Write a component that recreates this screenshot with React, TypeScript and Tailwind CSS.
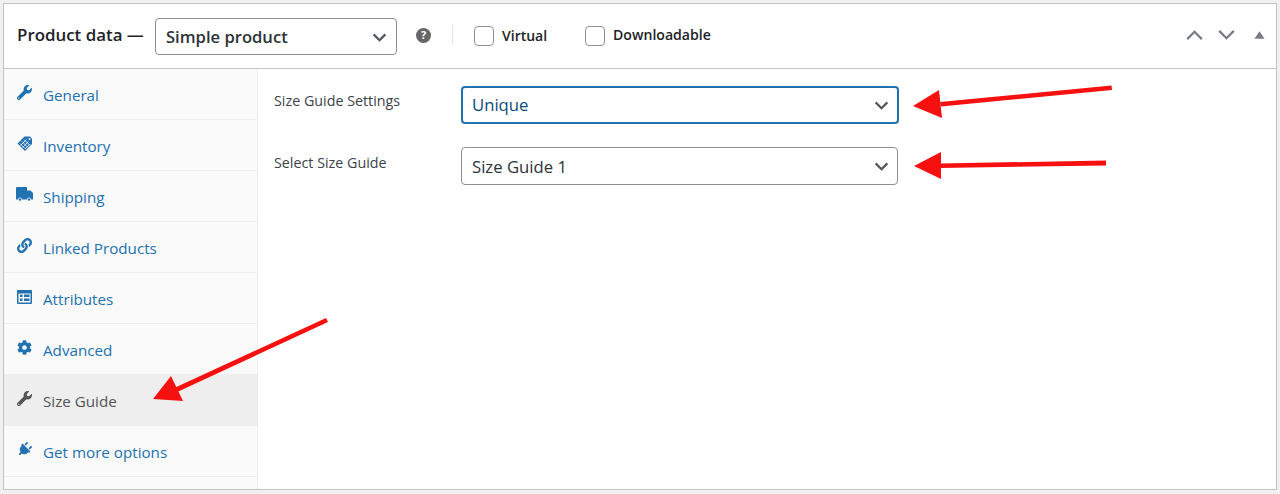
import React from "react";
import { FaWrench, FaLink, FaCog, FaPlug } from "react-icons/fa";

function Icon({ n }: { n: string }) {
  const c = "w-[16px] h-[16px] shrink-0";
  if (n === "wrench") return <FaWrench className="w-[15px] h-[15px] shrink-0" />;
  if (n === "tag") return (
    <svg viewBox="0 0 16 16" className={c}>
      <path className="fill-current" d="M7.500 0.500 0.500 7.500 8 15l7-7V2.500L13 0.500z" />
      <path d="M5 5.500l6 6M7 3.500l6 6M3 7.500l5 5M5.500 11.500l6-6M3.500 9.500l6-6M8 13l5-5" stroke="#fafafa" strokeWidth="0.8" fill="none" />
      <circle cx="12.500" cy="3" r="1" fill="#fafafa" />
    </svg>
  );
  if (n === "truck") return (
    <svg viewBox="0 0 17 15" className="w-[17px] h-[15px] shrink-0 -ml-[1px]">
      <path className="fill-current" d="M0 1a1 1 0 0 1 1-1h10v3.500h3.500L17 6v6.500H0z" />
      <circle cx="4" cy="12.500" r="2" fill="#fafafa" />
      <circle cx="13" cy="12.500" r="2" fill="#fafafa" />
      <circle className="fill-current" cx="4" cy="12.500" r="1.200" />
      <circle className="fill-current" cx="13" cy="12.500" r="1.200" />
    </svg>
  );
  if (n === "link") return <FaLink className="w-[15px] h-[15px] shrink-0" />;
  if (n === "card") return (
    <svg viewBox="0 0 15 14" className="w-[15px] h-[14px] shrink-0">
      <path className="fill-current" fillRule="evenodd" d="M0 1a1 1 0 0 1 1-1h13a1 1 0 0 1 1 1v12a1 1 0 0 1-1 1H1a1 1 0 0 1-1-1zM1.500 3.500v9h12v-9z" />
      <path className="fill-current" d="M3 4.500h2.500V7H3zM3 8.500h2.500V11H3zM7 4.500h5.500V7H7zM7 8.500h5.500V11H7z" />
    </svg>
  );
  if (n === "gear") return <FaCog className="w-[15px] h-[15px] shrink-0" />;
  return <FaPlug className="w-[15px] h-[15px] shrink-0 rotate-45" />;
}

function Chevron() {
  return (
    <svg viewBox="0 0 16 10" className="w-[15px] h-[9px] fill-none stroke-[#50575e] stroke-[2.500]">
      <path d="M1.500 1.500 8 8l6.500-6.500" />
    </svg>
  );
}

const tabs = [
  ["General", "wrench"],
  ["Inventory", "tag"],
  ["Shipping", "truck"],
  ["Linked Products", "link"],
  ["Attributes", "card"],
  ["Advanced", "gear"],
  ["Size Guide", "wrench"],
  ["Get more options", "plug"],
];

function Field({ label, value, focus, lift }: { label: string; value: string; focus?: boolean; lift: string }) {
  return (
    <div className="flex items-start">
      <div className={"w-[188px] pl-[1px] text-[14.300px] leading-[20px] text-[#3c434a] " + lift}>{label}</div>
      <div className={"h-[38px] rounded-[4px] flex items-center justify-between pr-[8px] text-[16.700px] " + (focus ? "w-[438px] pl-[9px] border-2 border-[#2271b1] text-[#0a4b78]" : "w-[437px] pl-[10px] border border-[#8c8f94] text-[#2c3338] pt-[1px]")}>
        <span>{value}</span>
        <Chevron />
      </div>
    </div>
  );
}

export default function App() {
  return (
    <div className="w-[1280px] h-[494px] bg-[#f0f0f1] pt-[3px] pl-[3px] relative overflow-hidden" style={{ fontFamily: '"Open Sans", "Noto Sans", sans-serif' }}>
      <div className="w-[1274px] h-[487px] bg-white border border-[#c3c4c7] flex flex-col">
        <div className="h-[65px] shrink-0 border-b border-[#c3c4c7] flex items-center pl-[13px] pr-[11px]">
          <span className="text-[16.900px] font-semibold text-[#1d2327] w-[138px] -mt-[2px]">Product data —</span>
          <div className="w-[242px] h-[37px] rounded-[4px] border border-[#8c8f94] flex items-center justify-between pl-[10px] pr-[9px] pt-[2px] text-[16.600px] font-semibold text-[#2c3338]">
            <span>Simple product</span>
            <Chevron />
          </div>
          <span className="ml-[19px] w-[15px] h-[15px] rounded-full bg-[#666666] text-white text-[11px] font-bold flex items-center justify-center -mt-[2px]">?</span>
          <span className="ml-[21px] w-px h-[20px] bg-[#e5e5e5] -mt-[2px]" />
          <span className="ml-[21px] w-[20px] h-[20px] rounded-[4px] border border-[#8c8f94] bg-white" />
          <span className="ml-[8px] w-[83px] text-[14px] font-semibold text-[#1d2327] -mt-[2px]">Virtual</span>
          <span className="w-[20px] h-[20px] rounded-[4px] border border-[#8c8f94] bg-white" />
          <span className="ml-[8px] text-[14.100px] font-semibold text-[#1d2327] -mt-[2px]">Downloadable</span>
          <div className="ml-auto flex items-center gap-[15px] text-[#787c82] -mt-[2px]">
            <svg viewBox="0 0 18 11" className="w-[17px] h-[10px] fill-none stroke-current stroke-[2.500]"><path d="M1 10 9 2l8 8" /></svg>
            <svg viewBox="0 0 18 11" className="w-[17px] h-[10px] fill-none stroke-current stroke-[2.500]"><path d="M1 1l8 8 8-8" /></svg>
            <svg viewBox="0 0 12 8" className="ml-[4px] w-[11px] h-[8px] fill-current"><path d="M6 0l5.500 8H.5z" /></svg>
          </div>
        </div>
        <div className="flex flex-1 min-h-0">
          <div className="w-[254px] shrink-0 bg-[#fafafa] border-r border-[#eeeeee]">
            {tabs.map(([t, i]) => {
              const on = t === "Size Guide";
              return (
                <div key={t} className={"h-[51px] flex items-center pl-[13px] pt-[2px] border-b " + (on ? "bg-[#eeeeee] border-[#eeeeee] text-[#555555]" : "border-[#eeeeee] text-[#2271b1]")}>
                  <span className="w-[26px] flex -mt-[5px]"><Icon n={i} /></span>
                  <span className="text-[15.200px] leading-[20px]">{t}</span>
                </div>
              );
            })}
          </div>
          <div className="flex-1 pl-[15px] pt-[17px] flex flex-col gap-[23px]">
            <Field label="Size Guide Settings" value="Unique" focus lift="mt-[5px]" />
            <Field label="Select Size Guide" value="Size Guide 1" lift="mt-[6px]" />
          </div>
        </div>
      </div>
      <svg className="absolute left-0 top-0 w-[1280px] h-[494px] pointer-events-none" viewBox="0 0 1280 494">
        <g fill="#f61010" stroke="none">
          <path d="M1111.500 85.500 L1112 90 L941 106.500 L940 102z" />
          <path d="M913 106 L939 90 L942 118z" />
          <path d="M1106 160.500 L1106 165.500 L940 168 L940 163.500z" />
          <path d="M914 166 L941 152 L941 179z" />
          <path d="M326 318 L328 322 L175 393 L172 389z" />
          <path d="M153 399 L171 376 L183 401z" />
        </g>
      </svg>
    </div>
  );
}
